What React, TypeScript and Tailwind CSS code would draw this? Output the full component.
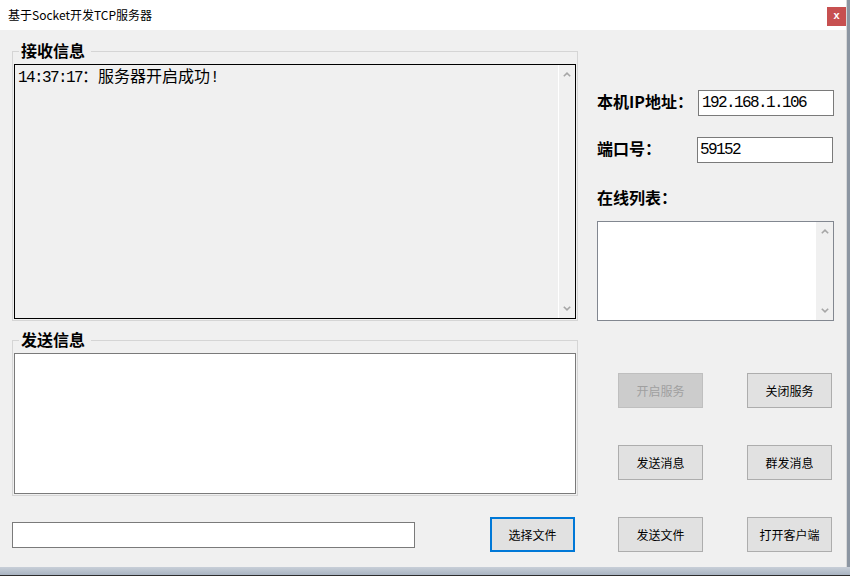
import React from "react";

const cjk = "font-['Noto_Sans_CJK_SC',sans-serif]";
const mono = "font-['Liberation_Mono','Noto_Sans_CJK_SC',monospace]";

function Chevron({ up }: { up?: boolean }) {
  return (
    <svg width="8" height="5" viewBox="0 0 8 5">
      <polyline
        points={up ? "0.8,4.3 4,1.2 7.2,4.3" : "0.8,0.7 4,3.8 7.2,0.7"}
        fill="none"
        stroke="#a6a6a6"
        strokeWidth="1.6"
      />
    </svg>
  );
}

function Btn({
  children,
  disabled,
  focused,
}: {
  children: React.ReactNode;
  disabled?: boolean;
  focused?: boolean;
}) {
  const cls = disabled
    ? "bg-[#cccccc] border border-[#bfbfbf] text-[#a0a0a0]"
    : focused
    ? "bg-[#e1e1e1] border-2 border-[#0078d7] text-black"
    : "bg-[#e1e1e1] border border-[#adadad] text-black";
  return (
    <div
      className={`w-[85px] h-[35px] flex items-center justify-center text-[12px] leading-[12px] ${cjk} ${cls}`}
    >
      {children}
    </div>
  );
}

export default function App() {
  return (
    <div className="w-[850px] h-[576px] flex flex-col overflow-hidden bg-[#8c96a2]">
      <div className="flex h-[567px]">
        <div className="w-[846px] flex flex-col">
          {/* title bar */}
          <div className="h-[30px] bg-white flex justify-between pl-[8px]">
            <span className={`text-[12px] leading-[30px] text-black ${cjk}`}>
              基于Socket开发TCP服务器
            </span>
            <div className="mt-[7px] w-[19px] h-[19px] bg-[#c75050] flex items-center justify-center">
              <span className="text-white text-[11px] leading-none font-bold font-['Liberation_Sans',sans-serif] -mt-[2px]">
                x
              </span>
            </div>
          </div>
          {/* body */}
          <div className="flex-1 bg-[#f0f0f0] flex">
            {/* left column */}
            <div className="w-[578px] pl-[12px] pt-[13px] flex flex-col">
              <fieldset className="w-[566px] min-w-0 border border-[#d5d5d5]">
                <legend
                  className={`ml-[6px] pl-[2px] pr-[6px] text-[16px] leading-[16px] font-bold text-black ${cjk}`}
                >
                  <span className="relative top-[-1px]">接收信息</span>
                </legend>
                <div className="mt-[5px] mx-[1px] mb-[1px] h-[255px] border border-black bg-[#f0f0f0] flex">
                  <div className="flex-1 pl-[3px] pt-[2px] text-[16px] leading-[16px] text-black whitespace-nowrap">
                    <span className={`${mono} tracking-[-1.6px]`}>14:37:17</span>
                    <span className={cjk}>：服务器开启成功</span>
                    <span className={`${mono}`}>!</span>
                  </div>
                  <div className="w-[17px] border-l border-white flex flex-col items-center justify-between py-[7px]">
                    <Chevron up />
                    <Chevron />
                  </div>
                </div>
              </fieldset>
              <fieldset className="mt-[11px] w-[566px] min-w-0 border border-[#d5d5d5]">
                <legend
                  className={`ml-[6px] pl-[2px] pr-[6px] text-[16px] leading-[16px] font-bold text-black ${cjk}`}
                >
                  <span className="relative top-[-1px]">发送信息</span>
                </legend>
                <div className="mt-[5px] mx-[1px] mb-[1px] h-[141px] border border-[#7a7a7a] bg-white" />
              </fieldset>
              <div className="mt-[21px] h-[35px] flex items-center">
                <div className="w-[403px] h-[26px] border border-[#7a7a7a] bg-white" />
                <div className="ml-[75px]">
                  <Btn focused>选择文件</Btn>
                </div>
              </div>
            </div>
            {/* right column */}
            <div className="pl-[19px] pt-[60px] flex flex-col">
              <div className="h-[26px] flex items-center">
                <span
                  className={`w-[101px] mb-[4px] text-[16px] leading-[16px] font-bold text-black whitespace-nowrap ${cjk}`}
                >
                  本机IP地址：
                </span>
                <div
                  className={`w-[136px] h-[26px] border border-[#7a7a7a] bg-white flex items-center pl-[3px] text-[16px] leading-[16px] text-black tracking-[-1.6px] ${mono}`}
                >
                  192.168.1.106
                </div>
              </div>
              <div className="mt-[21px] h-[26px] flex items-center">
                <span
                  className={`w-[100px] mb-[4px] text-[16px] leading-[16px] font-bold text-black whitespace-nowrap ${cjk}`}
                >
                  端口号：
                </span>
                <div
                  className={`w-[136px] h-[26px] border border-[#7a7a7a] bg-white flex items-center pl-[2px] text-[16px] leading-[16px] text-black tracking-[-1.6px] ${mono}`}
                >
                  59152
                </div>
              </div>
              <div
                className={`mt-[26px] text-[16px] leading-[16px] font-bold text-black ${cjk}`}
              >
                在线列表：
              </div>
              <div className="mt-[16px] w-[237px] h-[100px] border border-[#828790] bg-white flex justify-end">
                <div className="w-[17px] bg-[#f0f0f0] flex flex-col items-center justify-between py-[7px]">
                  <Chevron up />
                  <Chevron />
                </div>
              </div>
              <div className="mt-[52px] ml-[21px] grid grid-cols-[85px_85px] gap-x-[44px] gap-y-[37px]">
                <Btn disabled>开启服务</Btn>
                <Btn>关闭服务</Btn>
                <Btn>发送消息</Btn>
                <Btn>群发消息</Btn>
                <Btn>发送文件</Btn>
                <Btn>打开客户端</Btn>
              </div>
            </div>
          </div>
        </div>
        <div className="w-[4px] border-l border-[#d8d8d8] bg-[#8c96a2]" />
      </div>
      <div className="h-[8px] bg-gradient-to-b from-[#c8cfd8] to-[#a9b4c2]" />
      <div className="h-[1px] bg-[#2c2c2c]" />
    </div>
  );
}
